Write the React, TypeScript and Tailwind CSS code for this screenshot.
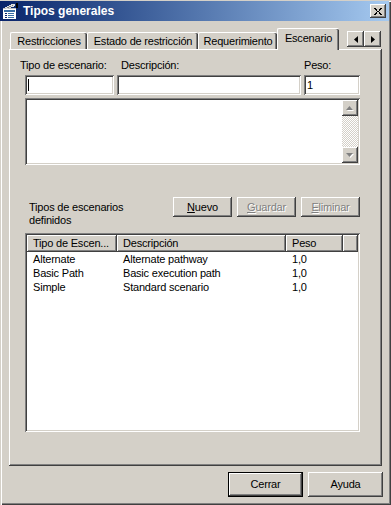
import React from 'react';

const raised =
  'shadow-[inset_-1px_-1px_#404040,inset_1px_1px_#ffffff,inset_-2px_-2px_#808080]';
const sunken =
  'shadow-[inset_1px_1px_#808080,inset_-1px_-1px_#ffffff,inset_2px_2px_#404040,inset_-2px_-2px_#d4d0c8]';

const rows = [
  { tipo: 'Alternate', desc: 'Alternate pathway', peso: '1,0' },
  { tipo: 'Basic Path', desc: 'Basic execution path', peso: '1,0' },
  { tipo: 'Simple', desc: 'Standard scenario', peso: '1,0' },
];

function TitleIcon() {
  return (
    <svg width="16" height="16" viewBox="0 0 16 16" shapeRendering="crispEdges">
      <rect x="0" y="5" width="13" height="11" fill="#ffffff" />
      <rect x="0" y="5" width="13" height="1" fill="#c0c0c0" />
      <rect x="1" y="7" width="11" height="2" fill="#3a6ea5" />
      <rect x="2" y="10" width="2" height="1" fill="#0a246a" />
      <rect x="5" y="10" width="6" height="1" fill="#3a6ea5" />
      <rect x="2" y="12" width="2" height="1" fill="#0a246a" />
      <rect x="5" y="12" width="6" height="1" fill="#3a6ea5" />
      <rect x="2" y="14" width="2" height="1" fill="#0a246a" />
      <rect x="5" y="14" width="6" height="1" fill="#3a6ea5" />
      <polygon points="1,5 9,1 12,1 12,3 4,6" fill="#e0e0e0" />
      <polygon points="3,5 10,2 11,2 5,5" fill="#808080" />
      <rect x="13" y="0" width="2" height="5" fill="#000000" />
    </svg>
  );
}

function CloseGlyph() {
  return (
    <svg width="8" height="7" viewBox="0 0 8 7" shapeRendering="crispEdges">
      <path d="M0 0h2v1H0zM1 1h2v1H1zM2 2h1v1H2zM3 3h2v1H3zM5 2h1v1H5zM5 1h2v1H5zM6 0h2v1H6zM2 4h1v1H2zM1 5h2v1H1zM0 6h2v1H0zM5 4h1v1H5zM5 5h2v1H5zM6 6h2v1H6z" fill="#000" />
    </svg>
  );
}

function Tab({ label, width, selected }: { label: string; width: string; selected?: boolean }) {
  if (selected) {
    return (
      <div
        className={`${width} h-[22px] bg-[#d4d0c8] border-l border-t border-white rounded-t-[2px] shadow-[inset_-1px_0_#404040,inset_-2px_0_#808080] text-center pt-[3px] leading-[13px] relative z-10`}
      >
        {label}
      </div>
    );
  }
  return (
    <div
      className={`${width} h-[17px] mb-px bg-[#d4d0c8] border-l border-t border-white rounded-t-[2px] shadow-[inset_-1px_0_#404040,inset_-2px_0_#808080] text-center pt-[2px] leading-[13px]`}
    >
      {label}
    </div>
  );
}

function Button({ children, disabled, className = '' }: { children: React.ReactNode; disabled?: boolean; className?: string }) {
  return (
    <div
      className={`bg-[#d4d0c8] ${raised} flex items-center justify-center leading-[13px] ${
        disabled ? 'text-[#808080] [text-shadow:1px_1px_0_#ffffff]' : ''
      } ${className}`}
    >
      {children}
    </div>
  );
}

export default function App() {
  return (
    <div className="w-[391px] h-[505px] bg-[#d4d0c8] flex flex-col overflow-hidden select-none text-black text-[11px] tracking-[-0.2px] font-['Liberation_Sans',Arial,sans-serif] shadow-[inset_1px_1px_#d4d0c8,inset_2px_2px_#ffffff,inset_-1px_-1px_#404040,inset_-2px_-2px_#808080]">
      {/* Title bar */}
      <div className="mt-px mr-[2px] h-[20px] shrink-0 bg-linear-to-r from-[#0a246a] to-[#a6caf0] flex items-center pl-[3px] pr-[3px]">
        <TitleIcon />
        <span className="ml-[4px] text-white font-bold text-[12px] tracking-normal leading-[14px]">Tipos generales</span>
        <div className={`ml-auto w-[16px] h-[14px] bg-[#d4d0c8] ${raised} flex items-center justify-center`}>
          <CloseGlyph />
        </div>
      </div>

      {/* Tabs + panel */}
      <div className="ml-[9px] w-[373px] mt-[7px]">
        <div className="relative z-10 flex items-end h-[22px] -mb-px pl-px pr-px">
          <Tab label="Restricciones" width="w-[77px]" />
          <Tab label="Estado de restricción" width="w-[111px]" />
          <Tab label="Requerimiento" width="w-[79px]" />
          <Tab label="Escenario" width="w-[62px]" selected />
          <div className="ml-auto mb-[3px] flex">
            <div className={`w-[17px] h-[16px] bg-[#d4d0c8] ${raised} flex items-center justify-center`}>
              <svg width="4" height="7" viewBox="0 0 4 7">
                <polygon points="4,0 4,7 0,3.5" fill="#000" />
              </svg>
            </div>
            <div className={`w-[17px] h-[16px] bg-[#d4d0c8] ${raised} flex items-center justify-center`}>
              <svg width="4" height="7" viewBox="0 0 4 7">
                <polygon points="0,0 0,7 4,3.5" fill="#000" />
              </svg>
            </div>
          </div>
        </div>

        <div className={`h-[417px] ${raised} pl-[16px] pt-[10px]`}>
          {/* Labels */}
          <div className="grid grid-cols-[89px_184px_56px] gap-x-[3px] leading-[13px]">
            <div className="-ml-[5px] whitespace-nowrap">Tipo de escenario:</div>
            <div className="ml-[4px]">Descripción:</div>
            <div>Peso:</div>
          </div>

          {/* Inputs */}
          <div className="mt-[3px] grid grid-cols-[89px_184px_56px] gap-x-[3px]">
            <div className={`h-[20px] bg-white ${sunken} relative`}>
              <div className="absolute left-[3px] top-[4px] w-px h-[12px] bg-black" />
            </div>
            <div className={`h-[20px] bg-white ${sunken}`} />
            <div className={`h-[20px] bg-white ${sunken} px-[3px] py-[2px] leading-[16px]`}>1</div>
          </div>

          {/* Text area */}
          <div className={`mt-[3px] w-[335px] h-[67px] bg-white ${sunken} p-[2px] flex`}>
            <div className="flex-1" />
            <div className="w-[16px] flex flex-col">
              <div className={`h-[16px] bg-[#d4d0c8] ${raised} flex items-center justify-center`}>
                <svg width="8" height="5" viewBox="0 0 8 5">
                  <polygon points="1,5 8,5 4.5,1" fill="#ffffff" />
                  <polygon points="0,4 7,4 3.5,0" fill="#808080" />
                </svg>
              </div>
              <div className="flex-1 bg-[image:repeating-conic-gradient(#d4d0c8_0%_25%,#ffffff_0%_50%)] bg-[length:2px_2px]" />
              <div className={`h-[16px] bg-[#d4d0c8] ${raised} flex items-center justify-center`}>
                <svg width="8" height="5" viewBox="0 0 8 5">
                  <polygon points="1,1 8,1 4.5,5" fill="#ffffff" />
                  <polygon points="0,0 7,0 3.5,4" fill="#808080" />
                </svg>
              </div>
            </div>
          </div>

          {/* Defined types header */}
          <div className="mt-[32px] w-[335px] flex items-start">
            <div className="ml-[4px] mt-[4px] leading-[13px]">
              Tipos de escenarios
              <br />
              definidos
            </div>
            <div className="ml-auto flex gap-[5px]">
              <Button className="w-[59px] h-[20px]">
                <span><span className="underline">N</span>uevo</span>
              </Button>
              <Button className="w-[59px] h-[20px]" disabled>
                <span><span className="underline">G</span>uardar</span>
              </Button>
              <Button className="w-[59px] h-[20px]" disabled>
                <span><span className="underline">E</span>liminar</span>
              </Button>
            </div>
          </div>

          {/* List view */}
          <div className={`mt-[6px] w-[335px] h-[199px] bg-white ${sunken} p-[2px]`}>
            <div className="flex h-[17px] leading-[17px]">
              <div className={`w-[90px] bg-[#d4d0c8] ${raised} pl-[6px] whitespace-nowrap overflow-hidden`}>Tipo de Escen...</div>
              <div className={`w-[169px] bg-[#d4d0c8] ${raised} pl-[6px]`}>Descripción</div>
              <div className={`w-[57px] bg-[#d4d0c8] ${raised} pl-[6px]`}>Peso</div>
              <div className={`flex-1 bg-[#d4d0c8] ${raised}`} />
            </div>
            {rows.map((r) => (
              <div key={r.tipo} className="flex h-[14px] leading-[14px]">
                <div className="w-[90px] pl-[6px] whitespace-nowrap">{r.tipo}</div>
                <div className="w-[169px] pl-[6px] whitespace-nowrap">{r.desc}</div>
                <div className="w-[57px] pl-[6px]">{r.peso}</div>
              </div>
            ))}
          </div>
        </div>
      </div>

      {/* Bottom buttons */}
      <div className="mt-[6px] flex justify-end gap-[5px] pr-[8px]">
        <div className="w-[75px] h-[25px] border border-black">
          <Button className="w-full h-full">Cerrar</Button>
        </div>
        <Button className="w-[75px] h-[25px]">Ayuda</Button>
      </div>
    </div>
  );
}
